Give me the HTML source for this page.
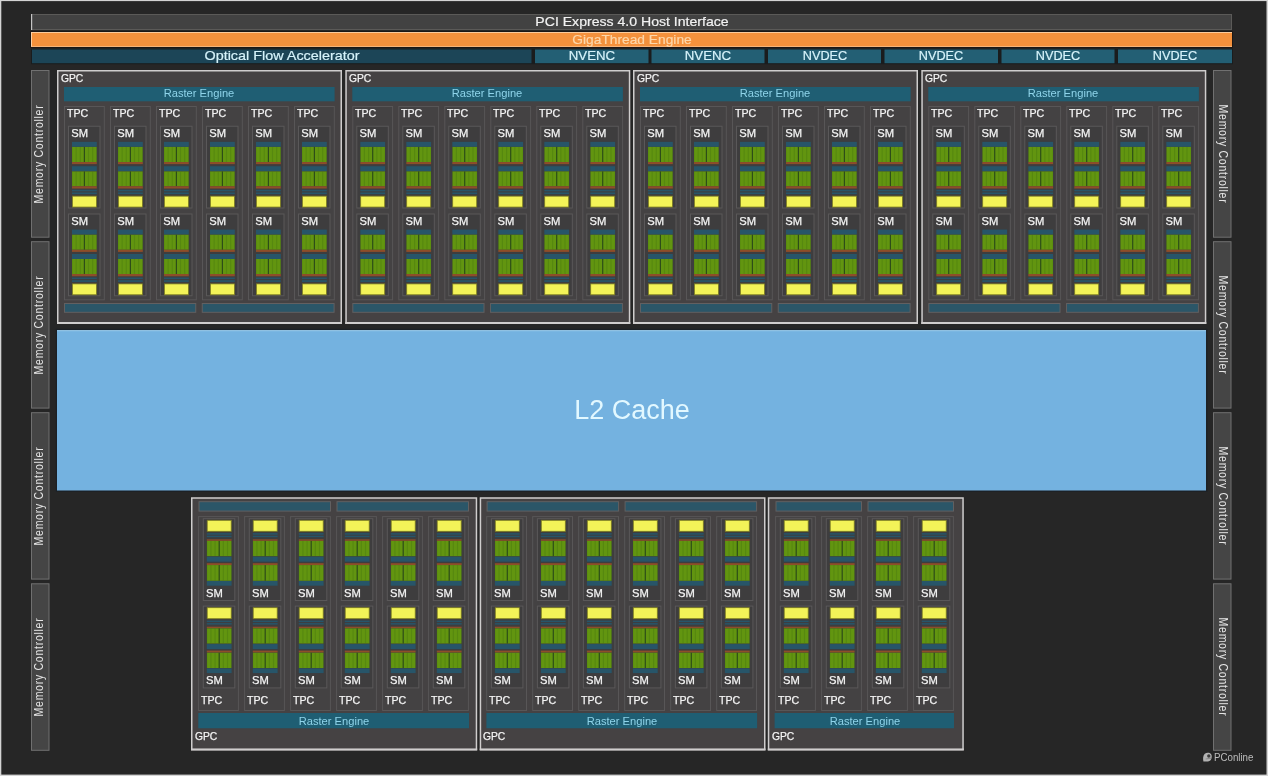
<!DOCTYPE html>
<html><head><meta charset="utf-8"><title>GPU Block Diagram</title>
<style>
html,body{margin:0;padding:0;background:#262626;}
body{width:1268px;height:776px;position:relative;overflow:hidden;font-family:"Liberation Sans",sans-serif;}
#all{position:absolute;left:0;top:0;width:1268px;height:776px;will-change:transform;}
#bg{position:absolute;left:0;top:0;display:block;}
.t{position:absolute;white-space:nowrap;line-height:1;display:inline-block;}
.w{color:#f2f2f2}
.big{font-size:13.6px;-webkit-text-stroke:0.2px currentColor;}
.gt{color:#fdd7aa}
.lb{color:#d6f3fb}
.mct{font-size:12.8px;color:#e6e6e6;letter-spacing:0.9px}
.l2t{font-size:27px;color:#e2f8ff;}
.gl,.sml{font-size:11.2px;color:#f4f4f4;-webkit-text-stroke:0.25px #f4f4f4;}
.ret{font-size:11.6px;color:#8fd4ea;}
.wm{font-size:10.8px;color:#bdbdbd;}
</style></head>
<body>
<div id="all">
<svg id="bg" width="1268" height="776" viewBox="0 0 1268 776">
<defs>
<clipPath id="gc"><rect width="24.8" height="16"/></clipPath>
<g id="g1" clip-path="url(#gc)"><rect width="24.8" height="16" fill="#629510"/><rect x="-0.55" width="1.1" height="16" fill="#4c7c10" opacity="0.5"/><rect x="3.58" width="1.1" height="16" fill="#4c7c10" opacity="0.5"/><rect x="7.72" width="1.1" height="16" fill="#4c7c10" opacity="0.5"/><rect x="15.98" width="1.1" height="16" fill="#4c7c10" opacity="0.5"/><rect x="20.12" width="1.1" height="16" fill="#4c7c10" opacity="0.5"/><rect x="24.25" width="1.1" height="16" fill="#4c7c10" opacity="0.5"/><rect x="11.8" width="1.2" height="16" fill="#2d4d18"/></g>
<g id="smt"><rect x="0.5" y="0.5" width="31.5" height="81.75" fill="#3e3d3e" stroke="#5a5859" stroke-width="1"/><rect x="4" y="16.1" width="24.8" height="4.9" fill="#275569"/><svg x="4" y="21" width="24.8" height="15.3" overflow="hidden"><use href="#g1"/></svg><rect x="4" y="36.3" width="24.8" height="2.1" fill="#8e4d29"/><rect x="4" y="40.5" width="24.8" height="5" fill="#275569"/><svg x="4" y="45.5" width="24.8" height="15" overflow="hidden"><use href="#g1"/></svg><rect x="4" y="60.5" width="24.8" height="2.3" fill="#8e4d29"/><rect x="4" y="64" width="24.8" height="1.6" fill="#275569"/><rect x="4" y="66.7" width="24.8" height="1.7" fill="#275569"/><rect x="4.4" y="70.4" width="24" height="10.9" fill="#f3f358" stroke="#7c7c22" stroke-width="0.8"/></g>
<g id="smb"><rect x="0.5" y="0.5" width="31.5" height="81.8" fill="#3e3d3e" stroke="#5a5859" stroke-width="1"/><rect x="4.4" y="2.1" width="24" height="11" fill="#f3f358" stroke="#7c7c22" stroke-width="0.8"/><rect x="4" y="15" width="24.8" height="1.5" fill="#275569"/><rect x="4" y="17.5" width="24.8" height="1.5" fill="#275569"/><rect x="4" y="21.1" width="24.8" height="1.5" fill="#8e4d29"/><svg x="4" y="22.6" width="24.8" height="15.4" overflow="hidden"><use href="#g1"/></svg><rect x="4" y="38.5" width="24.8" height="5" fill="#275569"/><rect x="4" y="45" width="24.8" height="1.9" fill="#8e4d29"/><svg x="4" y="46.9" width="24.8" height="15.6" overflow="hidden"><use href="#g1"/></svg><rect x="4" y="62.8" width="24.8" height="4.7" fill="#275569"/></g>
<g id="tpt"><rect x="0.5" y="0.5" width="39.8" height="193.3" fill="#444243" stroke="#585657" stroke-width="1"/><use href="#smt" x="4" y="19.75"/><use href="#smt" x="4" y="107.5"/></g>
<g id="tpb"><rect x="0.5" y="0.5" width="39.8" height="193.9" fill="#444243" stroke="#585657" stroke-width="1"/><use href="#smb" x="4.7" y="2.1"/><use href="#smb" x="4.7" y="89.5"/></g>
</defs>
<rect x="0" y="0" width="1268" height="776" fill="#262626"/>
<rect x="31.5" y="14.5" width="1200" height="15" fill="#424242" stroke="#5b5a58" stroke-width="1"/>
<rect x="31" y="14" width="1.2" height="16" fill="#c4c4c4"/>
<rect x="30.2" y="31.2" width="1202.6" height="16.6" fill="#1b1512"/>
<rect x="31" y="32" width="1201" height="15" fill="#f4913c"/>
<rect x="31" y="32" width="1201" height="1" fill="#fbcb9c"/>
<rect x="31" y="32" width="1" height="15" fill="#fbd0a4"/>
<rect x="31" y="46.2" width="1201" height="0.8" fill="#f8bd88"/>
<rect x="31" y="48.5" width="1202" height="15.7" fill="#1a1c1d"/>
<rect x="32" y="49.5" width="499.5" height="13.7" fill="#1c4557"/>
<rect x="535" y="49.5" width="113.5" height="13.7" fill="#235f74"/>
<rect x="651.5" y="49.5" width="113" height="13.7" fill="#235f74"/>
<rect x="768" y="49.5" width="113" height="13.7" fill="#235f74"/>
<rect x="884.5" y="49.5" width="113.5" height="13.7" fill="#235f74"/>
<rect x="1001.5" y="49.5" width="113" height="13.7" fill="#235f74"/>
<rect x="1118" y="49.5" width="114" height="13.7" fill="#235f74"/>
<rect x="31.5" y="70.5" width="17.5" height="166.7" fill="#454545" stroke="#707070" stroke-width="1"/>
<rect x="1213.5" y="70.5" width="17.5" height="166.7" fill="#454545" stroke="#707070" stroke-width="1"/>
<rect x="31.5" y="241.7" width="17.5" height="166.4" fill="#454545" stroke="#707070" stroke-width="1"/>
<rect x="1213.5" y="241.7" width="17.5" height="166.4" fill="#454545" stroke="#707070" stroke-width="1"/>
<rect x="31.5" y="412.7" width="17.5" height="166.4" fill="#454545" stroke="#707070" stroke-width="1"/>
<rect x="1213.5" y="412.7" width="17.5" height="166.4" fill="#454545" stroke="#707070" stroke-width="1"/>
<rect x="31.5" y="583.8" width="17.5" height="166.5" fill="#454545" stroke="#707070" stroke-width="1"/>
<rect x="1213.5" y="583.8" width="17.5" height="166.5" fill="#454545" stroke="#707070" stroke-width="1"/>
<rect x="55.8" y="328.8" width="1151.6" height="163" fill="#1c2126"/>
<rect x="57" y="330.2" width="1149" height="160.3" fill="#74b2e0"/>
<rect x="57" y="330.2" width="1149" height="1" fill="#9ccdec"/>
<rect x="57.75" y="70.75" width="283.5" height="252.5" fill="#454243" stroke="#cfcdcd" stroke-width="1.5"/>
<rect x="57" y="322" width="285" height="2" fill="#cfcdcd"/>
<rect x="64" y="87" width="270.6" height="14.3" fill="#1f5e73"/>
<use href="#tpt" x="64" y="106"/>
<use href="#tpt" x="110" y="106"/>
<use href="#tpt" x="156" y="106"/>
<use href="#tpt" x="202" y="106"/>
<use href="#tpt" x="248" y="106"/>
<use href="#tpt" x="294" y="106"/>
<rect x="64.5" y="303.5" width="131.25" height="8.8" fill="#2b5668" stroke="#626061" stroke-width="1"/>
<rect x="202.25" y="303.5" width="131.85" height="8.8" fill="#2b5668" stroke="#626061" stroke-width="1"/>
<rect x="346.05" y="70.75" width="283.5" height="252.5" fill="#454243" stroke="#cfcdcd" stroke-width="1.5"/>
<rect x="345.3" y="322" width="285" height="2" fill="#cfcdcd"/>
<rect x="352.3" y="87" width="270.6" height="14.3" fill="#1f5e73"/>
<use href="#tpt" x="352.3" y="106"/>
<use href="#tpt" x="398.3" y="106"/>
<use href="#tpt" x="444.3" y="106"/>
<use href="#tpt" x="490.3" y="106"/>
<use href="#tpt" x="536.3" y="106"/>
<use href="#tpt" x="582.3" y="106"/>
<rect x="352.8" y="303.5" width="131.25" height="8.8" fill="#2b5668" stroke="#626061" stroke-width="1"/>
<rect x="490.55" y="303.5" width="131.85" height="8.8" fill="#2b5668" stroke="#626061" stroke-width="1"/>
<rect x="633.75" y="70.75" width="283.5" height="252.5" fill="#454243" stroke="#cfcdcd" stroke-width="1.5"/>
<rect x="633" y="322" width="285" height="2" fill="#cfcdcd"/>
<rect x="640" y="87" width="270.6" height="14.3" fill="#1f5e73"/>
<use href="#tpt" x="640" y="106"/>
<use href="#tpt" x="686" y="106"/>
<use href="#tpt" x="732" y="106"/>
<use href="#tpt" x="778" y="106"/>
<use href="#tpt" x="824" y="106"/>
<use href="#tpt" x="870" y="106"/>
<rect x="640.5" y="303.5" width="131.25" height="8.8" fill="#2b5668" stroke="#626061" stroke-width="1"/>
<rect x="778.25" y="303.5" width="131.85" height="8.8" fill="#2b5668" stroke="#626061" stroke-width="1"/>
<rect x="922.05" y="70.75" width="283.5" height="252.5" fill="#454243" stroke="#cfcdcd" stroke-width="1.5"/>
<rect x="921.3" y="322" width="285" height="2" fill="#cfcdcd"/>
<rect x="928.3" y="87" width="270.6" height="14.3" fill="#1f5e73"/>
<use href="#tpt" x="928.3" y="106"/>
<use href="#tpt" x="974.3" y="106"/>
<use href="#tpt" x="1020.3" y="106"/>
<use href="#tpt" x="1066.3" y="106"/>
<use href="#tpt" x="1112.3" y="106"/>
<use href="#tpt" x="1158.3" y="106"/>
<rect x="928.8" y="303.5" width="131.25" height="8.8" fill="#2b5668" stroke="#626061" stroke-width="1"/>
<rect x="1066.55" y="303.5" width="131.85" height="8.8" fill="#2b5668" stroke="#626061" stroke-width="1"/>
<rect x="191.75" y="498" width="284.7" height="251.65" fill="#454243" stroke="#cfcdcd" stroke-width="1.5"/>
<rect x="191" y="748.5" width="286.2" height="1.9" fill="#cfcdcd"/>
<rect x="199" y="501.7" width="131.5" height="9.4" fill="#2b5668" stroke="#626061" stroke-width="1"/>
<rect x="337" y="501.7" width="131.5" height="9.4" fill="#2b5668" stroke="#626061" stroke-width="1"/>
<use href="#tpb" x="198.1" y="516.1"/>
<use href="#tpb" x="244.1" y="516.1"/>
<use href="#tpb" x="290.1" y="516.1"/>
<use href="#tpb" x="336.1" y="516.1"/>
<use href="#tpb" x="382.1" y="516.1"/>
<use href="#tpb" x="428.1" y="516.1"/>
<rect x="198.3" y="713" width="270.7" height="15.25" fill="#1f5e73"/>
<rect x="480.45" y="498" width="284.3" height="251.65" fill="#454243" stroke="#cfcdcd" stroke-width="1.5"/>
<rect x="479.7" y="748.5" width="285.8" height="1.9" fill="#cfcdcd"/>
<rect x="487.1" y="501.7" width="131.5" height="9.4" fill="#2b5668" stroke="#626061" stroke-width="1"/>
<rect x="625.1" y="501.7" width="131.5" height="9.4" fill="#2b5668" stroke="#626061" stroke-width="1"/>
<use href="#tpb" x="486.2" y="516.1"/>
<use href="#tpb" x="532.2" y="516.1"/>
<use href="#tpb" x="578.2" y="516.1"/>
<use href="#tpb" x="624.2" y="516.1"/>
<use href="#tpb" x="670.2" y="516.1"/>
<use href="#tpb" x="716.2" y="516.1"/>
<rect x="486.4" y="713" width="270.7" height="15.25" fill="#1f5e73"/>
<rect x="768.55" y="498" width="194.5" height="251.65" fill="#454243" stroke="#cfcdcd" stroke-width="1.5"/>
<rect x="767.8" y="748.5" width="196" height="1.9" fill="#cfcdcd"/>
<rect x="776" y="501.7" width="85.5" height="9.4" fill="#2b5668" stroke="#626061" stroke-width="1"/>
<rect x="868" y="501.7" width="85.5" height="9.4" fill="#2b5668" stroke="#626061" stroke-width="1"/>
<use href="#tpb" x="775.1" y="516.1"/>
<use href="#tpb" x="821.1" y="516.1"/>
<use href="#tpb" x="867.1" y="516.1"/>
<use href="#tpb" x="913.1" y="516.1"/>
<rect x="774.6" y="713" width="179.4" height="15.25" fill="#1f5e73"/>
<g transform="translate(1202.6 752.6) scale(0.1)"><path d="M8 90 C2 60 4 30 22 12 C38 -2 70 -2 84 14 C96 30 92 52 84 70 C78 84 60 90 40 90 Z" fill="#b2b2b2"/><circle cx="62" cy="34" r="17" fill="#3c3c3c"/><path d="M30 58 L88 50 L86 62 L30 70 Z" fill="#8a8a8a"/></g>
<rect x="0" y="0" width="1268" height="1.1" fill="#d4d4d4"/>
<rect x="0" y="0" width="1.3" height="776" fill="#d4d4d4"/>
<rect x="1266.5" y="0" width="1.5" height="776" fill="#d4d4d4"/>
<rect x="0" y="774.6" width="1268" height="1.4" fill="#d4d4d4"/>
</svg>
<span class="t big w" style="left:631.8px;top:21.5px;transform:translate(-50%,-50%) scaleX(1.036)">PCI Express 4.0 Host Interface</span>
<span class="t big gt" style="left:631.7px;top:39.8px;transform:translate(-50%,-50%) scaleX(1.013)">GigaThread Engine</span>
<span class="t big lb" style="left:281.8px;top:56px;transform:translate(-50%,-50%) scaleX(1.058)">Optical Flow Accelerator</span>
<span class="t big lb" style="left:591.75px;top:56.2px;transform:translate(-50%,-50%) scaleX(0.975)">NVENC</span>
<span class="t big lb" style="left:708px;top:56.2px;transform:translate(-50%,-50%) scaleX(0.975)">NVENC</span>
<span class="t big lb" style="left:824.5px;top:56.2px;transform:translate(-50%,-50%) scaleX(0.935)">NVDEC</span>
<span class="t big lb" style="left:941.25px;top:56.2px;transform:translate(-50%,-50%) scaleX(0.935)">NVDEC</span>
<span class="t big lb" style="left:1058px;top:56.2px;transform:translate(-50%,-50%) scaleX(0.935)">NVDEC</span>
<span class="t big lb" style="left:1175px;top:56.2px;transform:translate(-50%,-50%) scaleX(0.935)">NVDEC</span>
<span class="t mct" style="left:39.4px;top:153.55px;transform:translate(-50%,-50%) rotate(-90deg) scaleX(0.82)">Memory Controller</span>
<span class="t mct" style="left:1223.1px;top:154.15px;transform:translate(-50%,-50%) rotate(90deg) scaleX(0.82)">Memory Controller</span>
<span class="t mct" style="left:39.4px;top:324.6px;transform:translate(-50%,-50%) rotate(-90deg) scaleX(0.82)">Memory Controller</span>
<span class="t mct" style="left:1223.1px;top:325.2px;transform:translate(-50%,-50%) rotate(90deg) scaleX(0.82)">Memory Controller</span>
<span class="t mct" style="left:39.4px;top:495.6px;transform:translate(-50%,-50%) rotate(-90deg) scaleX(0.82)">Memory Controller</span>
<span class="t mct" style="left:1223.1px;top:496.2px;transform:translate(-50%,-50%) rotate(90deg) scaleX(0.82)">Memory Controller</span>
<span class="t mct" style="left:39.4px;top:666.75px;transform:translate(-50%,-50%) rotate(-90deg) scaleX(0.82)">Memory Controller</span>
<span class="t mct" style="left:1223.1px;top:667.35px;transform:translate(-50%,-50%) rotate(90deg) scaleX(0.82)">Memory Controller</span>
<span class="t l2t" style="left:632px;top:409.5px;transform:translate(-50%,-50%) scaleX(1.0)">L2 Cache</span>
<span class="t gl" style="left:60.8px;top:79.2px;transform-origin:0 50%;transform:translate(0,-50%) scaleX(0.92)">GPC</span>
<span class="t ret" style="left:199px;top:92.9px;transform:translate(-50%,-50%) scaleX(0.96)">Raster Engine</span>
<span class="t gl" style="left:66.8px;top:114.2px;transform-origin:0 50%;transform:translate(0,-50%) scaleX(0.95)">TPC</span>
<span class="t sml" style="left:71.2px;top:134.05px;transform-origin:0 50%;transform:translate(0,-50%) scaleX(1.0)">SM</span>
<span class="t sml" style="left:71.2px;top:221.8px;transform-origin:0 50%;transform:translate(0,-50%) scaleX(1.0)">SM</span>
<span class="t gl" style="left:112.8px;top:114.2px;transform-origin:0 50%;transform:translate(0,-50%) scaleX(0.95)">TPC</span>
<span class="t sml" style="left:117.2px;top:134.05px;transform-origin:0 50%;transform:translate(0,-50%) scaleX(1.0)">SM</span>
<span class="t sml" style="left:117.2px;top:221.8px;transform-origin:0 50%;transform:translate(0,-50%) scaleX(1.0)">SM</span>
<span class="t gl" style="left:158.8px;top:114.2px;transform-origin:0 50%;transform:translate(0,-50%) scaleX(0.95)">TPC</span>
<span class="t sml" style="left:163.2px;top:134.05px;transform-origin:0 50%;transform:translate(0,-50%) scaleX(1.0)">SM</span>
<span class="t sml" style="left:163.2px;top:221.8px;transform-origin:0 50%;transform:translate(0,-50%) scaleX(1.0)">SM</span>
<span class="t gl" style="left:204.8px;top:114.2px;transform-origin:0 50%;transform:translate(0,-50%) scaleX(0.95)">TPC</span>
<span class="t sml" style="left:209.2px;top:134.05px;transform-origin:0 50%;transform:translate(0,-50%) scaleX(1.0)">SM</span>
<span class="t sml" style="left:209.2px;top:221.8px;transform-origin:0 50%;transform:translate(0,-50%) scaleX(1.0)">SM</span>
<span class="t gl" style="left:250.8px;top:114.2px;transform-origin:0 50%;transform:translate(0,-50%) scaleX(0.95)">TPC</span>
<span class="t sml" style="left:255.2px;top:134.05px;transform-origin:0 50%;transform:translate(0,-50%) scaleX(1.0)">SM</span>
<span class="t sml" style="left:255.2px;top:221.8px;transform-origin:0 50%;transform:translate(0,-50%) scaleX(1.0)">SM</span>
<span class="t gl" style="left:296.8px;top:114.2px;transform-origin:0 50%;transform:translate(0,-50%) scaleX(0.95)">TPC</span>
<span class="t sml" style="left:301.2px;top:134.05px;transform-origin:0 50%;transform:translate(0,-50%) scaleX(1.0)">SM</span>
<span class="t sml" style="left:301.2px;top:221.8px;transform-origin:0 50%;transform:translate(0,-50%) scaleX(1.0)">SM</span>
<span class="t gl" style="left:349.1px;top:79.2px;transform-origin:0 50%;transform:translate(0,-50%) scaleX(0.92)">GPC</span>
<span class="t ret" style="left:487.3px;top:92.9px;transform:translate(-50%,-50%) scaleX(0.96)">Raster Engine</span>
<span class="t gl" style="left:355.1px;top:114.2px;transform-origin:0 50%;transform:translate(0,-50%) scaleX(0.95)">TPC</span>
<span class="t sml" style="left:359.5px;top:134.05px;transform-origin:0 50%;transform:translate(0,-50%) scaleX(1.0)">SM</span>
<span class="t sml" style="left:359.5px;top:221.8px;transform-origin:0 50%;transform:translate(0,-50%) scaleX(1.0)">SM</span>
<span class="t gl" style="left:401.1px;top:114.2px;transform-origin:0 50%;transform:translate(0,-50%) scaleX(0.95)">TPC</span>
<span class="t sml" style="left:405.5px;top:134.05px;transform-origin:0 50%;transform:translate(0,-50%) scaleX(1.0)">SM</span>
<span class="t sml" style="left:405.5px;top:221.8px;transform-origin:0 50%;transform:translate(0,-50%) scaleX(1.0)">SM</span>
<span class="t gl" style="left:447.1px;top:114.2px;transform-origin:0 50%;transform:translate(0,-50%) scaleX(0.95)">TPC</span>
<span class="t sml" style="left:451.5px;top:134.05px;transform-origin:0 50%;transform:translate(0,-50%) scaleX(1.0)">SM</span>
<span class="t sml" style="left:451.5px;top:221.8px;transform-origin:0 50%;transform:translate(0,-50%) scaleX(1.0)">SM</span>
<span class="t gl" style="left:493.1px;top:114.2px;transform-origin:0 50%;transform:translate(0,-50%) scaleX(0.95)">TPC</span>
<span class="t sml" style="left:497.5px;top:134.05px;transform-origin:0 50%;transform:translate(0,-50%) scaleX(1.0)">SM</span>
<span class="t sml" style="left:497.5px;top:221.8px;transform-origin:0 50%;transform:translate(0,-50%) scaleX(1.0)">SM</span>
<span class="t gl" style="left:539.1px;top:114.2px;transform-origin:0 50%;transform:translate(0,-50%) scaleX(0.95)">TPC</span>
<span class="t sml" style="left:543.5px;top:134.05px;transform-origin:0 50%;transform:translate(0,-50%) scaleX(1.0)">SM</span>
<span class="t sml" style="left:543.5px;top:221.8px;transform-origin:0 50%;transform:translate(0,-50%) scaleX(1.0)">SM</span>
<span class="t gl" style="left:585.1px;top:114.2px;transform-origin:0 50%;transform:translate(0,-50%) scaleX(0.95)">TPC</span>
<span class="t sml" style="left:589.5px;top:134.05px;transform-origin:0 50%;transform:translate(0,-50%) scaleX(1.0)">SM</span>
<span class="t sml" style="left:589.5px;top:221.8px;transform-origin:0 50%;transform:translate(0,-50%) scaleX(1.0)">SM</span>
<span class="t gl" style="left:636.8px;top:79.2px;transform-origin:0 50%;transform:translate(0,-50%) scaleX(0.92)">GPC</span>
<span class="t ret" style="left:775px;top:92.9px;transform:translate(-50%,-50%) scaleX(0.96)">Raster Engine</span>
<span class="t gl" style="left:642.8px;top:114.2px;transform-origin:0 50%;transform:translate(0,-50%) scaleX(0.95)">TPC</span>
<span class="t sml" style="left:647.2px;top:134.05px;transform-origin:0 50%;transform:translate(0,-50%) scaleX(1.0)">SM</span>
<span class="t sml" style="left:647.2px;top:221.8px;transform-origin:0 50%;transform:translate(0,-50%) scaleX(1.0)">SM</span>
<span class="t gl" style="left:688.8px;top:114.2px;transform-origin:0 50%;transform:translate(0,-50%) scaleX(0.95)">TPC</span>
<span class="t sml" style="left:693.2px;top:134.05px;transform-origin:0 50%;transform:translate(0,-50%) scaleX(1.0)">SM</span>
<span class="t sml" style="left:693.2px;top:221.8px;transform-origin:0 50%;transform:translate(0,-50%) scaleX(1.0)">SM</span>
<span class="t gl" style="left:734.8px;top:114.2px;transform-origin:0 50%;transform:translate(0,-50%) scaleX(0.95)">TPC</span>
<span class="t sml" style="left:739.2px;top:134.05px;transform-origin:0 50%;transform:translate(0,-50%) scaleX(1.0)">SM</span>
<span class="t sml" style="left:739.2px;top:221.8px;transform-origin:0 50%;transform:translate(0,-50%) scaleX(1.0)">SM</span>
<span class="t gl" style="left:780.8px;top:114.2px;transform-origin:0 50%;transform:translate(0,-50%) scaleX(0.95)">TPC</span>
<span class="t sml" style="left:785.2px;top:134.05px;transform-origin:0 50%;transform:translate(0,-50%) scaleX(1.0)">SM</span>
<span class="t sml" style="left:785.2px;top:221.8px;transform-origin:0 50%;transform:translate(0,-50%) scaleX(1.0)">SM</span>
<span class="t gl" style="left:826.8px;top:114.2px;transform-origin:0 50%;transform:translate(0,-50%) scaleX(0.95)">TPC</span>
<span class="t sml" style="left:831.2px;top:134.05px;transform-origin:0 50%;transform:translate(0,-50%) scaleX(1.0)">SM</span>
<span class="t sml" style="left:831.2px;top:221.8px;transform-origin:0 50%;transform:translate(0,-50%) scaleX(1.0)">SM</span>
<span class="t gl" style="left:872.8px;top:114.2px;transform-origin:0 50%;transform:translate(0,-50%) scaleX(0.95)">TPC</span>
<span class="t sml" style="left:877.2px;top:134.05px;transform-origin:0 50%;transform:translate(0,-50%) scaleX(1.0)">SM</span>
<span class="t sml" style="left:877.2px;top:221.8px;transform-origin:0 50%;transform:translate(0,-50%) scaleX(1.0)">SM</span>
<span class="t gl" style="left:925.1px;top:79.2px;transform-origin:0 50%;transform:translate(0,-50%) scaleX(0.92)">GPC</span>
<span class="t ret" style="left:1063.3px;top:92.9px;transform:translate(-50%,-50%) scaleX(0.96)">Raster Engine</span>
<span class="t gl" style="left:931.1px;top:114.2px;transform-origin:0 50%;transform:translate(0,-50%) scaleX(0.95)">TPC</span>
<span class="t sml" style="left:935.5px;top:134.05px;transform-origin:0 50%;transform:translate(0,-50%) scaleX(1.0)">SM</span>
<span class="t sml" style="left:935.5px;top:221.8px;transform-origin:0 50%;transform:translate(0,-50%) scaleX(1.0)">SM</span>
<span class="t gl" style="left:977.1px;top:114.2px;transform-origin:0 50%;transform:translate(0,-50%) scaleX(0.95)">TPC</span>
<span class="t sml" style="left:981.5px;top:134.05px;transform-origin:0 50%;transform:translate(0,-50%) scaleX(1.0)">SM</span>
<span class="t sml" style="left:981.5px;top:221.8px;transform-origin:0 50%;transform:translate(0,-50%) scaleX(1.0)">SM</span>
<span class="t gl" style="left:1023.1px;top:114.2px;transform-origin:0 50%;transform:translate(0,-50%) scaleX(0.95)">TPC</span>
<span class="t sml" style="left:1027.5px;top:134.05px;transform-origin:0 50%;transform:translate(0,-50%) scaleX(1.0)">SM</span>
<span class="t sml" style="left:1027.5px;top:221.8px;transform-origin:0 50%;transform:translate(0,-50%) scaleX(1.0)">SM</span>
<span class="t gl" style="left:1069.1px;top:114.2px;transform-origin:0 50%;transform:translate(0,-50%) scaleX(0.95)">TPC</span>
<span class="t sml" style="left:1073.5px;top:134.05px;transform-origin:0 50%;transform:translate(0,-50%) scaleX(1.0)">SM</span>
<span class="t sml" style="left:1073.5px;top:221.8px;transform-origin:0 50%;transform:translate(0,-50%) scaleX(1.0)">SM</span>
<span class="t gl" style="left:1115.1px;top:114.2px;transform-origin:0 50%;transform:translate(0,-50%) scaleX(0.95)">TPC</span>
<span class="t sml" style="left:1119.5px;top:134.05px;transform-origin:0 50%;transform:translate(0,-50%) scaleX(1.0)">SM</span>
<span class="t sml" style="left:1119.5px;top:221.8px;transform-origin:0 50%;transform:translate(0,-50%) scaleX(1.0)">SM</span>
<span class="t gl" style="left:1161.1px;top:114.2px;transform-origin:0 50%;transform:translate(0,-50%) scaleX(0.95)">TPC</span>
<span class="t sml" style="left:1165.5px;top:134.05px;transform-origin:0 50%;transform:translate(0,-50%) scaleX(1.0)">SM</span>
<span class="t sml" style="left:1165.5px;top:221.8px;transform-origin:0 50%;transform:translate(0,-50%) scaleX(1.0)">SM</span>
<span class="t sml" style="left:206px;top:593.9px;transform-origin:0 50%;transform:translate(0,-50%) scaleX(1.0)">SM</span>
<span class="t sml" style="left:206px;top:681.3px;transform-origin:0 50%;transform:translate(0,-50%) scaleX(1.0)">SM</span>
<span class="t gl" style="left:200.9px;top:700.8px;transform-origin:0 50%;transform:translate(0,-50%) scaleX(0.95)">TPC</span>
<span class="t sml" style="left:252px;top:593.9px;transform-origin:0 50%;transform:translate(0,-50%) scaleX(1.0)">SM</span>
<span class="t sml" style="left:252px;top:681.3px;transform-origin:0 50%;transform:translate(0,-50%) scaleX(1.0)">SM</span>
<span class="t gl" style="left:246.9px;top:700.8px;transform-origin:0 50%;transform:translate(0,-50%) scaleX(0.95)">TPC</span>
<span class="t sml" style="left:298px;top:593.9px;transform-origin:0 50%;transform:translate(0,-50%) scaleX(1.0)">SM</span>
<span class="t sml" style="left:298px;top:681.3px;transform-origin:0 50%;transform:translate(0,-50%) scaleX(1.0)">SM</span>
<span class="t gl" style="left:292.9px;top:700.8px;transform-origin:0 50%;transform:translate(0,-50%) scaleX(0.95)">TPC</span>
<span class="t sml" style="left:344px;top:593.9px;transform-origin:0 50%;transform:translate(0,-50%) scaleX(1.0)">SM</span>
<span class="t sml" style="left:344px;top:681.3px;transform-origin:0 50%;transform:translate(0,-50%) scaleX(1.0)">SM</span>
<span class="t gl" style="left:338.9px;top:700.8px;transform-origin:0 50%;transform:translate(0,-50%) scaleX(0.95)">TPC</span>
<span class="t sml" style="left:390px;top:593.9px;transform-origin:0 50%;transform:translate(0,-50%) scaleX(1.0)">SM</span>
<span class="t sml" style="left:390px;top:681.3px;transform-origin:0 50%;transform:translate(0,-50%) scaleX(1.0)">SM</span>
<span class="t gl" style="left:384.9px;top:700.8px;transform-origin:0 50%;transform:translate(0,-50%) scaleX(0.95)">TPC</span>
<span class="t sml" style="left:436px;top:593.9px;transform-origin:0 50%;transform:translate(0,-50%) scaleX(1.0)">SM</span>
<span class="t sml" style="left:436px;top:681.3px;transform-origin:0 50%;transform:translate(0,-50%) scaleX(1.0)">SM</span>
<span class="t gl" style="left:430.9px;top:700.8px;transform-origin:0 50%;transform:translate(0,-50%) scaleX(0.95)">TPC</span>
<span class="t ret" style="left:333.75px;top:720.9px;transform:translate(-50%,-50%) scaleX(0.96)">Raster Engine</span>
<span class="t gl" style="left:195.1px;top:736.6px;transform-origin:0 50%;transform:translate(0,-50%) scaleX(0.92)">GPC</span>
<span class="t sml" style="left:494.1px;top:593.9px;transform-origin:0 50%;transform:translate(0,-50%) scaleX(1.0)">SM</span>
<span class="t sml" style="left:494.1px;top:681.3px;transform-origin:0 50%;transform:translate(0,-50%) scaleX(1.0)">SM</span>
<span class="t gl" style="left:489px;top:700.8px;transform-origin:0 50%;transform:translate(0,-50%) scaleX(0.95)">TPC</span>
<span class="t sml" style="left:540.1px;top:593.9px;transform-origin:0 50%;transform:translate(0,-50%) scaleX(1.0)">SM</span>
<span class="t sml" style="left:540.1px;top:681.3px;transform-origin:0 50%;transform:translate(0,-50%) scaleX(1.0)">SM</span>
<span class="t gl" style="left:535px;top:700.8px;transform-origin:0 50%;transform:translate(0,-50%) scaleX(0.95)">TPC</span>
<span class="t sml" style="left:586.1px;top:593.9px;transform-origin:0 50%;transform:translate(0,-50%) scaleX(1.0)">SM</span>
<span class="t sml" style="left:586.1px;top:681.3px;transform-origin:0 50%;transform:translate(0,-50%) scaleX(1.0)">SM</span>
<span class="t gl" style="left:581px;top:700.8px;transform-origin:0 50%;transform:translate(0,-50%) scaleX(0.95)">TPC</span>
<span class="t sml" style="left:632.1px;top:593.9px;transform-origin:0 50%;transform:translate(0,-50%) scaleX(1.0)">SM</span>
<span class="t sml" style="left:632.1px;top:681.3px;transform-origin:0 50%;transform:translate(0,-50%) scaleX(1.0)">SM</span>
<span class="t gl" style="left:627px;top:700.8px;transform-origin:0 50%;transform:translate(0,-50%) scaleX(0.95)">TPC</span>
<span class="t sml" style="left:678.1px;top:593.9px;transform-origin:0 50%;transform:translate(0,-50%) scaleX(1.0)">SM</span>
<span class="t sml" style="left:678.1px;top:681.3px;transform-origin:0 50%;transform:translate(0,-50%) scaleX(1.0)">SM</span>
<span class="t gl" style="left:673px;top:700.8px;transform-origin:0 50%;transform:translate(0,-50%) scaleX(0.95)">TPC</span>
<span class="t sml" style="left:724.1px;top:593.9px;transform-origin:0 50%;transform:translate(0,-50%) scaleX(1.0)">SM</span>
<span class="t sml" style="left:724.1px;top:681.3px;transform-origin:0 50%;transform:translate(0,-50%) scaleX(1.0)">SM</span>
<span class="t gl" style="left:719px;top:700.8px;transform-origin:0 50%;transform:translate(0,-50%) scaleX(0.95)">TPC</span>
<span class="t ret" style="left:621.85px;top:720.9px;transform:translate(-50%,-50%) scaleX(0.96)">Raster Engine</span>
<span class="t gl" style="left:483.2px;top:736.6px;transform-origin:0 50%;transform:translate(0,-50%) scaleX(0.92)">GPC</span>
<span class="t sml" style="left:783px;top:593.9px;transform-origin:0 50%;transform:translate(0,-50%) scaleX(1.0)">SM</span>
<span class="t sml" style="left:783px;top:681.3px;transform-origin:0 50%;transform:translate(0,-50%) scaleX(1.0)">SM</span>
<span class="t gl" style="left:777.9px;top:700.8px;transform-origin:0 50%;transform:translate(0,-50%) scaleX(0.95)">TPC</span>
<span class="t sml" style="left:829px;top:593.9px;transform-origin:0 50%;transform:translate(0,-50%) scaleX(1.0)">SM</span>
<span class="t sml" style="left:829px;top:681.3px;transform-origin:0 50%;transform:translate(0,-50%) scaleX(1.0)">SM</span>
<span class="t gl" style="left:823.9px;top:700.8px;transform-origin:0 50%;transform:translate(0,-50%) scaleX(0.95)">TPC</span>
<span class="t sml" style="left:875px;top:593.9px;transform-origin:0 50%;transform:translate(0,-50%) scaleX(1.0)">SM</span>
<span class="t sml" style="left:875px;top:681.3px;transform-origin:0 50%;transform:translate(0,-50%) scaleX(1.0)">SM</span>
<span class="t gl" style="left:869.9px;top:700.8px;transform-origin:0 50%;transform:translate(0,-50%) scaleX(0.95)">TPC</span>
<span class="t sml" style="left:921px;top:593.9px;transform-origin:0 50%;transform:translate(0,-50%) scaleX(1.0)">SM</span>
<span class="t sml" style="left:921px;top:681.3px;transform-origin:0 50%;transform:translate(0,-50%) scaleX(1.0)">SM</span>
<span class="t gl" style="left:915.9px;top:700.8px;transform-origin:0 50%;transform:translate(0,-50%) scaleX(0.95)">TPC</span>
<span class="t ret" style="left:864.75px;top:720.9px;transform:translate(-50%,-50%) scaleX(0.96)">Raster Engine</span>
<span class="t gl" style="left:772.1px;top:736.6px;transform-origin:0 50%;transform:translate(0,-50%) scaleX(0.92)">GPC</span>
<span class="t wm" style="left:1213.7px;top:756.8px;transform-origin:0 50%;transform:translate(0,-50%) scaleX(0.9)">PConline</span>
</div>
</body></html>
